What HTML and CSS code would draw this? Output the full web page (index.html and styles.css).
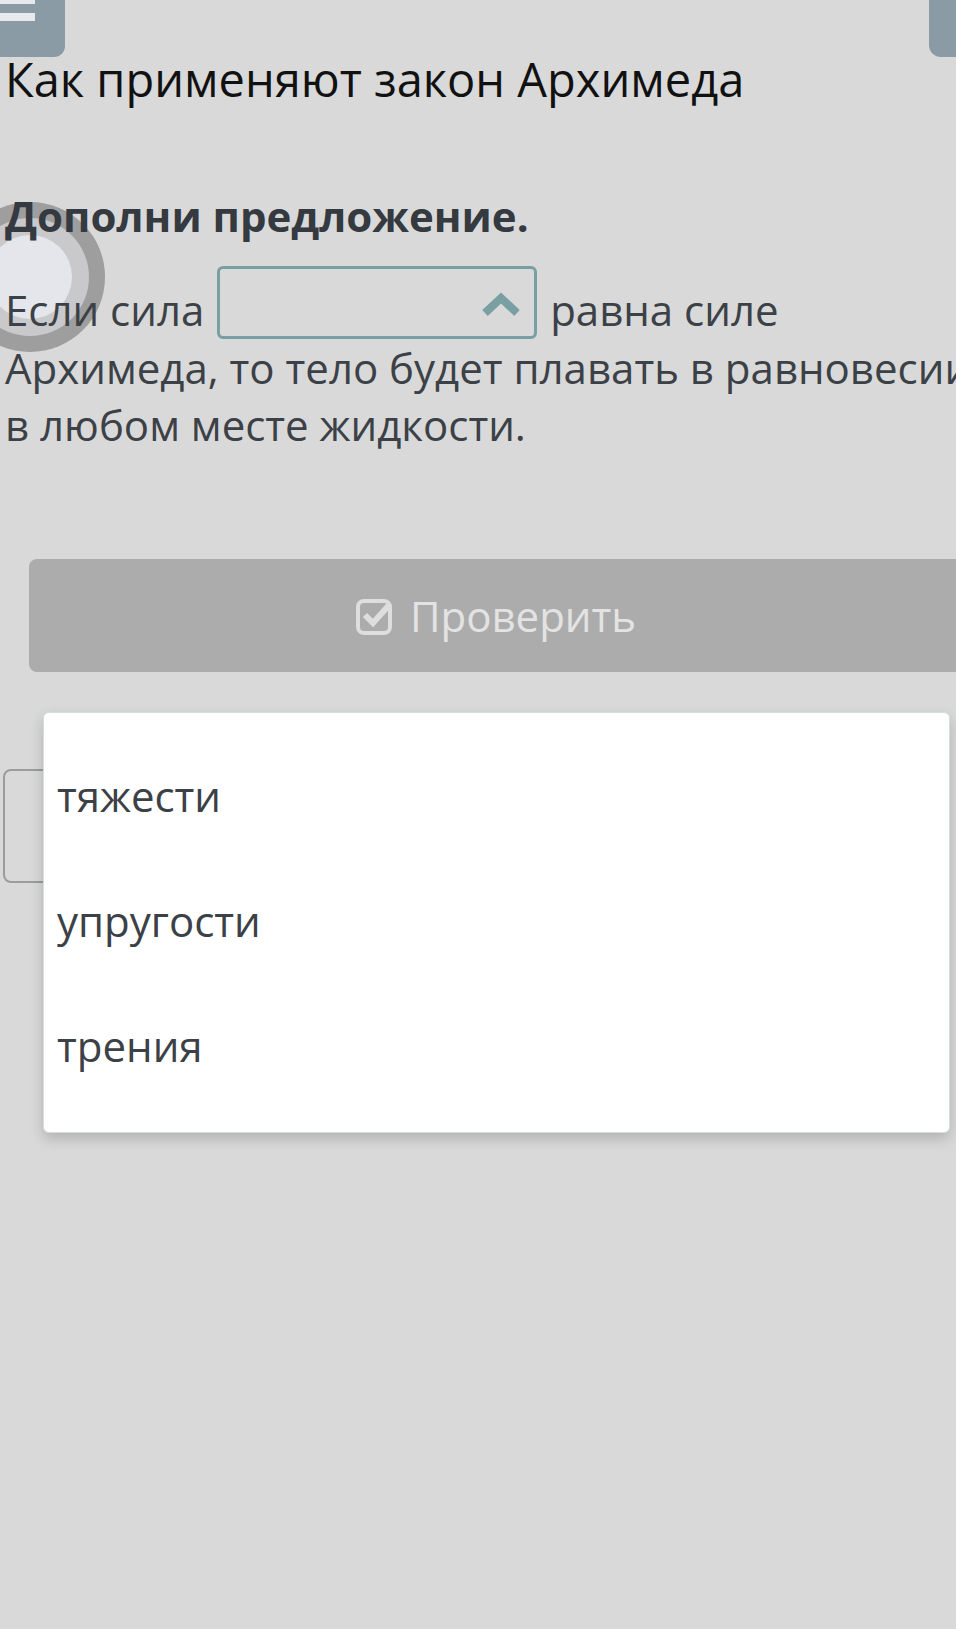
FILE: index.html
```html
<!DOCTYPE html>
<html lang="ru">
<head>
    <meta charset="UTF-8">
    <meta name="viewport" content="width=device-width, initial-scale=1.0">
    <title>Как применяют закон Архимеда</title>
    <link rel="stylesheet" href="styles.css">
</head>
<body>

<div class="page">
    <div class="top-bar">
        <button class="bar-button menu-button">
            <svg width="40" height="24" viewBox="0 0 40 24">
                <rect x="0" y="-4" width="35" height="8" fill="#e6eaed"/>
                <rect x="0" y="13" width="35" height="8" fill="#e6eaed"/>
            </svg>
        </button>
        <button class="bar-button right-button"></button>
    </div>

    <h1 class="lesson-title">Как применяют закон Архимеда</h1>

    <h2 class="task-title">Дополни предложение.</h2>

    <p class="task-text">Если сила <span class="blank-select"><svg class="chevron" width="40" height="26" viewBox="0 0 40 26"><polyline points="4,22 20,7 36,22" fill="none" stroke="#7a9fa3" stroke-width="8"/></svg></span> равна силе Архимеда, то тело будет плавать в равновесии в любом месте жидкости.</p>

    <button class="check-button">
        <svg width="38" height="38" viewBox="0 0 38 38">
            <rect x="2" y="4" width="32" height="32" rx="6" fill="none" stroke="#dedede" stroke-width="4"/>
            <polyline points="9,18 17,26 34,7" fill="none" stroke="#dedede" stroke-width="6"/>
        </svg>
        Проверить
    </button>

    <div class="next-box"></div>

    <!-- open dropdown of the blank -->
    <ul class="options">
        <li>тяжести</li>
        <li>упругости</li>
        <li>трения</li>
    </ul>

    <!-- tap indicator from the screen recording -->
    <div class="touch-mark"><div class="touch-inner"></div></div>
</div>

</body>
</html>
```

FILE: styles.css
```css
body {
    margin: 0;
    background-color: #d9d9d9;
    font-family: 'Open Sans', 'Noto Sans', sans-serif;
    overflow: hidden;
}

.page {
    position: relative;
    width: 985px;
    height: 1629px;
    padding-left: 5px;
}

.top-bar {
    display: flex;
    justify-content: space-between;
    height: 57px;
    margin-left: -5px;
    width: 1000px;
}

.bar-button {
    border: none;
    padding: 0;
    background-color: #8a9ba6;
    height: 57px;
}

.menu-button {
    width: 65px;
    border-radius: 0 0 11px 0;
    display: flex;
    align-items: flex-start;
}

.right-button {
    width: 71px;
    border-radius: 0 0 0 12px;
}

.lesson-title {
    margin: 0;
    font-size: 47px;
    font-weight: 400;
    line-height: 44px;
    color: #111;
}

.task-title {
    margin: 93px 0 0;
    font-size: 42px;
    font-weight: 700;
    line-height: 44px;
    color: #343a40;
}

.task-text {
    margin: 28px 0 0;
    font-size: 42px;
    line-height: 57px;
    color: #3b4146;
    width: 980px;
}

.blank-select {
    display: inline-block;
    position: relative;
    box-sizing: border-box;
    width: 320px;
    height: 73px;
    border: 3px solid #7a9fa3;
    border-radius: 6px;
    vertical-align: -13px;
    margin: 0 2px;
}

.chevron {
    position: absolute;
    right: 13px;
    top: 22px;
}

.check-button {
    display: flex;
    align-items: center;
    justify-content: center;
    gap: 16px;
    margin: 106px 0 0 24px;
    width: 934px;
    height: 113px;
    border: none;
    border-radius: 8px;
    background-color: #acacac;
    color: #e3e3e3;
    font-family: 'Open Sans', sans-serif;
    font-size: 42px;
}

.next-box {
    margin: 97px 0 0 -2px;
    width: 300px;
    height: 114px;
    box-sizing: border-box;
    border: 2px solid #9c9c9c;
    border-radius: 8px;
}

.options {
    position: absolute;
    left: 43px;
    top: 712px;
    width: 907px;
    box-sizing: border-box;
    margin: 0;
    padding: 20px 0 24px;
    list-style: none;
    background-color: #fff;
    border: 1px solid #cfe0df;
    border-radius: 6px;
    box-shadow: 0 6px 14px rgba(0, 0, 0, 0.18);
}

.options li {
    height: 125px;
    line-height: 125px;
    padding-left: 13px;
    font-size: 42px;
    color: #3b4146;
}

.touch-mark {
    position: absolute;
    z-index: -1;
    left: -45px;
    top: 202px;
    width: 150px;
    height: 150px;
    border-radius: 50%;
    background-color: rgba(110, 110, 110, 0.55);
    display: flex;
    align-items: center;
    justify-content: center;
}

.touch-inner {
    width: 84px;
    height: 84px;
    border-radius: 50%;
    background-color: #e5e6eb;
    box-shadow: 0 0 0 17px #c9c9cc;
}
```
